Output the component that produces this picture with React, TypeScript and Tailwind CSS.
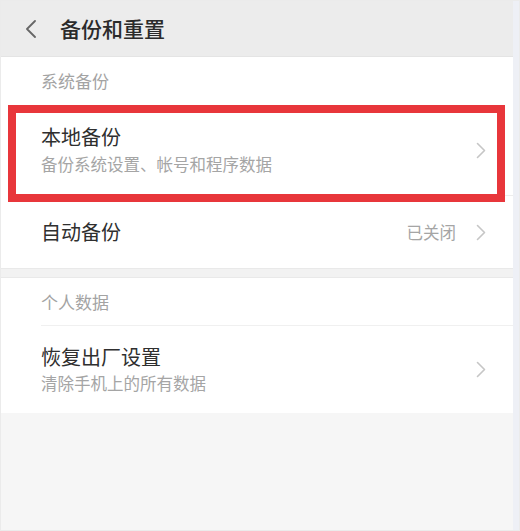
import * as React from "react"

const font = { fontFamily: '"Noto Sans CJK SC", "Noto Sans", sans-serif' }

function Chevron() {
  return (
    <svg width="10" height="17" viewBox="0 0 10 17" fill="none" className="shrink-0">
      <path d="M1.5 1.5 L8.5 8.5 L1.5 15.5" stroke="#c6c6c6" strokeWidth="1.6" strokeLinecap="round" strokeLinejoin="round" />
    </svg>
  )
}

function SectionLabel({ children, className = "" }: { children: React.ReactNode; className?: string }) {
  return (
    <div className={"flex items-center pl-[40px] text-[17px] text-[#a3a3a3] " + className}>
      {children}
    </div>
  )
}

export default function App() {
  return (
    <div
      className="w-[520px] h-[531px] overflow-hidden bg-white border border-[#ebebeb] flex"
      style={font}
    >
      <div className="flex-1 flex flex-col bg-[#f6f6f6]">
        {/* header */}
        <div className="h-[56px] bg-[#ececec] flex items-center border-b border-[#e4e4e4]">
          <svg width="12" height="18" viewBox="0 0 12 18" fill="none" className="ml-[24px]">
            <path d="M10 1 L2 9 L10 17" stroke="#666" strokeWidth="1.8" strokeLinecap="round" strokeLinejoin="round" />
          </svg>
          <span className="ml-[23px] text-[21px] font-medium text-[#2b2b2b] leading-none">备份和重置</span>
        </div>

        {/* system backup */}
        <div className="bg-white flex flex-col">
          <SectionLabel className="h-[48px]">系统备份</SectionLabel>

          <div className="relative h-[90px] flex items-center pl-[40px] pr-[27px]">
            <div className="flex-1 flex flex-col">
              <span className="text-[20px] leading-[26px] text-[#2f2f2f]">本地备份</span>
              <span className="text-[16.5px] leading-[24px] mt-[2px] text-[#a5a5a5]">备份系统设置、帐号和程序数据</span>
            </div>
            <Chevron />
            <div className="absolute left-[7px] top-0 w-[497px] h-[97px] border-[8px] border-[#e8363b]" />
          </div>

          <div className="ml-[40px] h-px bg-[#ededed]" />

          <div className="h-[72px] flex items-center pl-[40px] pr-[27px]">
            <span className="flex-1 text-[20px] text-[#2f2f2f]">自动备份</span>
            <span className="text-[16.5px] text-[#a5a5a5] mr-[20px]">已关闭</span>
            <Chevron />
          </div>
        </div>

        <div className="h-[10px] bg-[#f2f2f2] border-t border-b border-[#e9e9e9]" />

        {/* personal data */}
        <div className="bg-white flex flex-col">
          <SectionLabel className="h-[47px]">个人数据</SectionLabel>
          <div className="ml-[40px] h-px bg-[#f0f0f0]" />
          <div className="h-[87px] flex items-center pl-[40px] pr-[27px]">
            <div className="flex-1 flex flex-col">
              <span className="text-[20px] leading-[26px] text-[#2f2f2f]">恢复出厂设置</span>
              <span className="text-[16.5px] leading-[24px] mt-[1px] text-[#a5a5a5]">清除手机上的所有数据</span>
            </div>
            <Chevron />
          </div>
        </div>
      </div>
      <div className="w-[6px] bg-[#eef0f6]" />
    </div>
  )
}
